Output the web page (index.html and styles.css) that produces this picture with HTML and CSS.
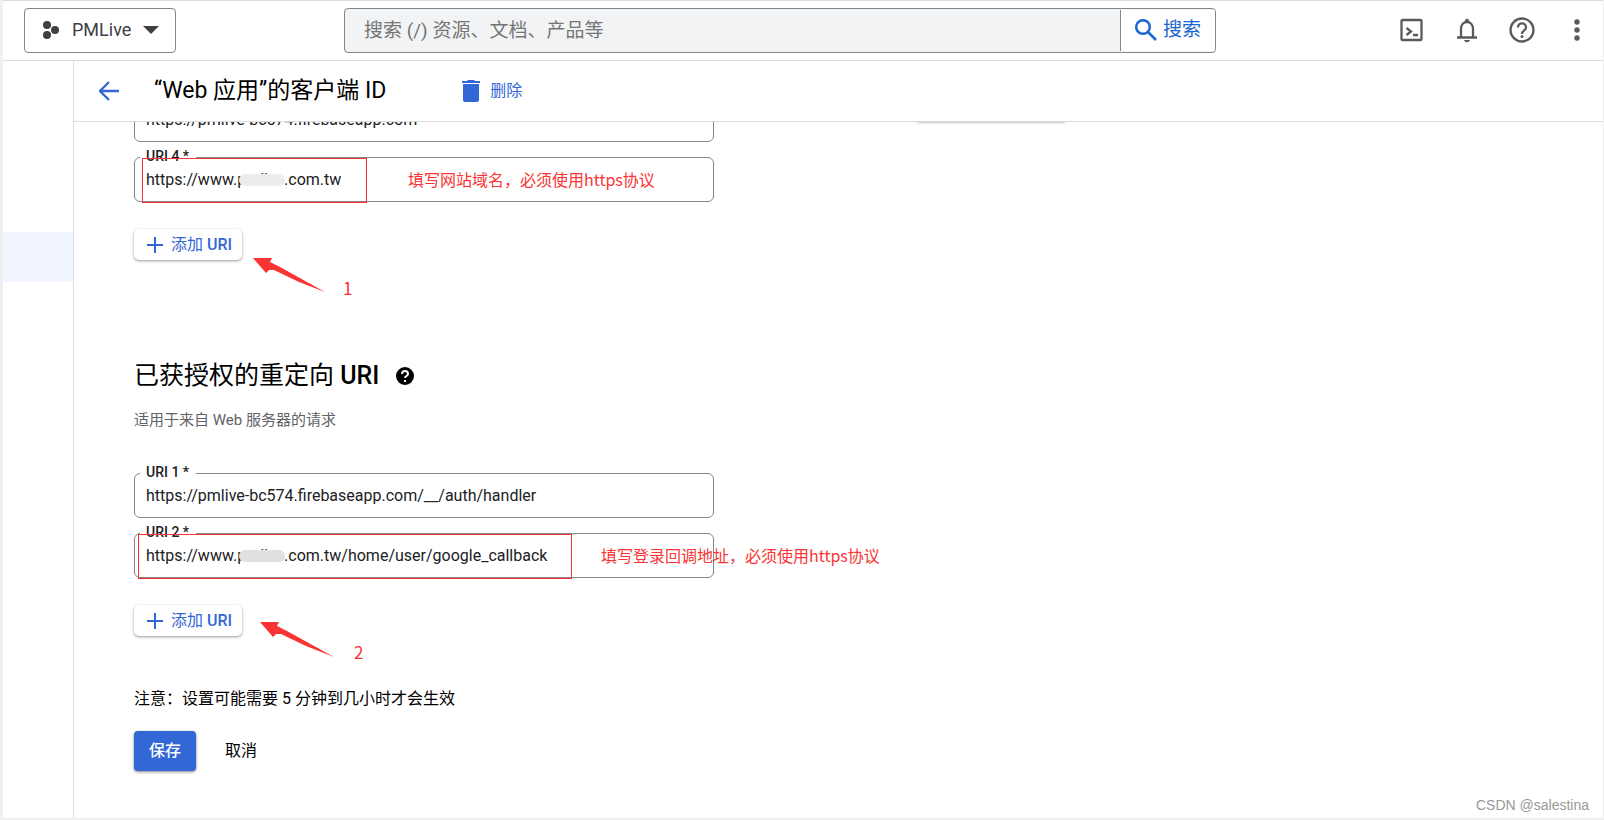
FILE: index.html
```html
<!DOCTYPE html>
<html lang="zh-CN">
<head>
<meta charset="utf-8">
<title>“Web 应用”的客户端 ID</title>
<link rel="stylesheet" href="styles.css">
</head>
<body>
<div class="frame">
  <header class="topbar">
    <button class="project" type="button">
      <svg class="project-icon" viewBox="0 0 18 18" aria-hidden="true"><circle cx="5" cy="4" r="4"/><circle cx="13" cy="9" r="4"/><circle cx="5" cy="14" r="4"/></svg>
      <span>PMLive</span>
      <svg class="caret" viewBox="0 0 16 8" aria-hidden="true"><path d="M0 0h16L8 8z"/></svg>
    </button>
    <form class="search">
      <input class="search-input" type="text" aria-label="搜索" placeholder="搜索 (/) 资源、文档、产品等">
      <button class="search-button" type="button">
        <svg viewBox="0 0 22 22" aria-hidden="true"><circle cx="8" cy="8" r="6.800"/><path d="M13 13l8 8"/></svg>
        <span>搜索</span>
      </button>
    </form>
    <nav class="tools">
      <button class="tool" type="button" aria-label="Cloud Shell"><svg viewBox="0 0 26 26"><rect class="line heavy" x="2.500" y="3" width="20" height="20" rx="1"/><path class="line heavy" d="M7.500 11l4.500 3.500-4.500 3.500M14 18h5"/></svg></button>
      <button class="tool" type="button" aria-label="通知"><svg viewBox="0 0 26 26"><path class="line heavy" d="M7 20v-8c0-4 2.500-7 6-7s6 3 6 7v8M3 20.500h20"/><path d="M11 4c0-3 4-3 4 0v1h-4zM10 23h6c-1 3-5 3-6 0z"/></svg></button>
      <button class="tool" type="button" aria-label="帮助"><svg viewBox="0 0 26 26"><circle class="line heavy" cx="13" cy="13" r="11.500"/><path class="line heavy" d="M9 10.500C9 5 17 5 17 10.500c0 3-4 3-4 6.500"/><circle cx="13" cy="19.500" r="1.500"/></svg></button>
      <button class="tool" type="button" aria-label="更多"><svg viewBox="0 0 26 26"><circle cx="13" cy="5" r="2.700"/><circle cx="13" cy="13" r="2.700"/><circle cx="13" cy="21" r="2.700"/></svg></button>
    </nav>
  </header>
  <div class="body">
    <aside class="sidebar"><div class="sidebar-active"></div></aside>
    <section class="page">
      <div class="titlebar">
        <button class="back" type="button" aria-label="返回"><svg viewBox="0 0 20 20"><path d="M20 10H2M10 1l-9 9 9 9"/></svg></button>
        <h1>“Web 应用”的客户端 ID</h1>
        <button class="delete" type="button">
          <svg viewBox="0 0 18 24" aria-hidden="true"><path d="M0 2h5l1-1h6l1 1h5v2H0zM1 5h16v16q0 2-2 2H3q-2 0-2-2z"/></svg>
          <span>删除</span>
        </button>
      </div>
      <main class="content">
        <form class="form">
          <div class="fields">
            <div class="field">
              <input type="text" aria-label="URI 3" value="https://pmlive-bc574.firebaseapp.com">
            </div>
            <div class="field">
              <label for="origin4">URI 4 *</label>
              <input id="origin4" type="text" value="https://www.pmlive.com.tw">
              <span class="smudge"></span>
              <span class="mark mark-origin"></span>
              <span class="note note-origin">填写网站域名，必须使用https协议</span>
            </div>
          </div>
          <div class="add-row">
            <button class="add" type="button"><svg viewBox="0 0 16 16" aria-hidden="true"><path d="M8 0v16M0 8h16"/></svg><span>添加 <b>URI</b></span></button>
            <div class="pointer pointer-first"><svg viewBox="0 0 74 36" aria-hidden="true"><path d="M0 0h19l-2 4 10 5 45 25-26-10-25-12h-5l-3 3z"/></svg><span>1</span></div>
          </div>
          <h2><span>已获授权的重定向 <b>URI</b></span>
            <svg viewBox="0 0 18 18" aria-hidden="true"><circle cx="9" cy="9" r="9"/><path d="M6 7c0-4 6-4 6 0 0 2-3 2-3 4"/><path d="M9 13v2"/></svg>
          </h2>
          <p class="hint">适用于来自 Web 服务器的请求</p>
          <div class="fields">
            <div class="field">
              <label for="redirect1">URI 1 *</label>
              <input id="redirect1" type="text" value="https://pmlive-bc574.firebaseapp.com/__/auth/handler">
            </div>
            <div class="field">
              <label for="redirect2">URI 2 *</label>
              <input id="redirect2" type="text" value="https://www.pmlive.com.tw/home/user/google_callback">
              <span class="smudge smudge-dark"></span>
              <span class="mark mark-redirect"></span>
              <span class="note note-redirect">填写登录回调地址，必须使用https协议</span>
            </div>
          </div>
          <div class="add-row">
            <button class="add" type="button"><svg viewBox="0 0 16 16" aria-hidden="true"><path d="M8 0v16M0 8h16"/></svg><span>添加 <b>URI</b></span></button>
            <div class="pointer pointer-second"><svg viewBox="0 0 74 36" aria-hidden="true"><path d="M0 0h19l-2 4 10 5 47 26-28-11-25-12h-5l-3 3z"/></svg><span>2</span></div>
          </div>
          <p class="delay">注意：设置可能需要 5 分钟到几小时才会生效</p>
          <div class="actions">
            <button class="save" type="button">保存</button>
            <button class="cancel" type="button">取消</button>
          </div>
        </form>
        <div class="side-card"></div>
      </main>
    </section>
  </div>
  <div class="credit">CSDN @salestina</div>
</div>
</body>
</html>
```
FILE: styles.css
```css
* { box-sizing: border-box; }
body {
  margin: 0;
  background: #f0f0f0;
  color: #000;
  font: 16px/24px Roboto, "Noto Sans CJK SC", sans-serif;
}
button, input { font: inherit; color: inherit; }
button {
  display: flex;
  align-items: center;
  padding: 0;
  border: 0;
  background: none;
  white-space: nowrap;
}
h1, h2, p { margin: 0; }
b { font-weight: 500; }
svg { display: block; flex: none; }

.frame {
  position: relative;
  display: flex;
  flex-direction: column;
  height: 100vh;
  border: solid #f0f0f0;
  border-width: 0 1px 2px 3px;
  background: #fff;
  overflow: hidden;
}

.topbar {
  display: flex;
  align-items: center;
  flex: none;
  height: 61px;
  padding: 0 13px 0 21px;
  border-top: 1px solid #dadce0;
  border-bottom: 1px solid #dadce0;
}
.project {
  flex: none;
  width: 152px;
  height: 45px;
  padding: 0 0 2px 17px;
  border: 1px solid #80868b;
  border-radius: 4px;
  color: #3c4043;
  font-size: 18px;
}
.project svg { fill: #3c4043; }
.project-icon { width: 18px; height: 18px; margin-right: 12px; }
.caret { width: 16px; height: 8px; margin-left: 12px; }
.search {
  display: flex;
  flex: 1;
  height: 45px;
  margin: 0 183px 0 168px;
  border: 1px solid #80868b;
  border-radius: 4px;
  background: #f1f3f4;
  font-size: 19px;
  overflow: hidden;
}
.search-input {
  flex: 1;
  min-width: 0;
  padding: 0 19px;
  border: 0;
  background: none;
}
.search-input::placeholder { color: #757575; opacity: 1; }
.search-button {
  width: 95px;
  height: 41px;
  margin-top: 1px;
  padding: 0 0 2px 14px;
  gap: 6px;
  border-left: 1px solid #80868b;
  background: #fff;
  color: #1967d2;
}
.search-button svg { width: 22px; height: 22px; fill: none; stroke: #1967d2; stroke-width: 2.5; }
.tools { display: flex; gap: 29px; padding-bottom: 2px; }
.tool svg { width: 26px; height: 26px; fill: #5a5a5a; }
.tool svg .line { fill: none; stroke: #5a5a5a; stroke-width: 2.3; }

.body { display: flex; flex: 1; min-height: 0; }
.sidebar {
  flex: none;
  width: 71px;
  padding-top: 171px;
  border-right: 1px solid #dadce0;
}
.sidebar-active { height: 50px; background: #f0f5ff; }
.page { display: flex; flex: 1; flex-direction: column; min-width: 0; }
.titlebar {
  display: flex;
  align-items: center;
  flex: none;
  height: 61px;
  padding-left: 25px;
  border-bottom: 1px solid #dadce0;
}
.back svg { width: 20px; height: 20px; fill: none; stroke: #3367d6; stroke-width: 2.3; }
h1 { margin: 0 76px 0 35px; font-size: 23px; font-weight: 400; }
.delete { gap: 10px; color: #3367d6; }
.delete svg { width: 18px; height: 24px; fill: #3367d6; }

.content {
  display: flex;
  flex: 1;
  align-items: flex-start;
  gap: 202px;
  min-height: 0;
  padding-left: 60px;
  overflow: hidden;
}
.form { width: 580px; margin-top: -25px; }
.fields { display: grid; gap: 15px; }
.field { position: relative; }
.field input {
  display: block;
  width: 100%;
  height: 45px;
  padding: 0 11px;
  border: 1px solid #80868b;
  border-radius: 6px;
  background: #fff;
  color: #202124;
}
.field label {
  position: absolute;
  top: -11px;
  left: 6px;
  height: 20px;
  padding: 0 7px 0 6px;
  background: #fff;
  color: #202124;
  font-size: 14px;
  font-weight: 500;
  line-height: 20px;
}
.smudge {
  position: absolute;
  top: 17px;
  left: 105px;
  width: 46px;
  height: 12px;
  border-radius: 6px;
  background: #ececec;
}
.smudge-dark { background: #e0e0e0; }
.mark { position: absolute; top: 1px; height: 45px; border: 1px solid #fa3434; }
.mark-origin { left: 8px; width: 225px; }
.mark-redirect { left: 4px; width: 434px; }
.note {
  position: absolute;
  top: 10px;
  color: #fa3434;
  font-family: "Noto Sans CJK SC", sans-serif;
  white-space: nowrap;
}
.note-origin { left: 274px; }
.note-redirect { left: 467px; }

.add-row { position: relative; margin-top: 27px; }
.add {
  height: 31px;
  padding: 0 10px 0 13px;
  gap: 8px;
  border-radius: 5px;
  box-shadow: 0 1px 3px rgba(0, 0, 0, .4);
  color: #3367d6;
}
.add svg { width: 16px; height: 16px; stroke: #3367d6; stroke-width: 2; }
.pointer {
  position: absolute;
  display: flex;
  color: #fa3434;
  font-family: "Noto Sans CJK SC", sans-serif;
  font-size: 17px;
}
.pointer svg { width: 74px; height: 36px; fill: #fa3434; }
.pointer span { padding-top: 18px; }
.pointer-first { top: 29px; left: 119px; gap: 16px; }
.pointer-second { top: 17px; left: 126px; gap: 20px; }

h2 {
  display: flex;
  align-items: center;
  gap: 17px;
  margin-top: 99px;
  font-size: 25px;
  font-weight: 400;
  line-height: 34px;
}
h2 svg { width: 18px; height: 18px; }
h2 path { fill: none; stroke: #fff; stroke-width: 2; }
.hint { margin: 15px 0 41px; color: #5f6368; font-size: 15px; }
.delay { margin-top: 51px; }
.actions { display: flex; gap: 29px; margin-top: 20px; }
.save {
  height: 40px;
  padding: 0 15px;
  border-radius: 4px;
  background: #3367d6;
  box-shadow: 0 1px 3px rgba(0, 0, 0, .5);
  color: #fff;
  font-weight: 500;
}
.side-card {
  width: 150px;
  height: 24px;
  margin-top: -25px;
  border-radius: 4px;
  box-shadow: 0 1px 3px rgba(0, 0, 0, .5);
}
.credit {
  position: absolute;
  right: 14px;
  bottom: 1px;
  color: #999;
  font-family: "Liberation Sans", Arial, sans-serif;
  font-size: 14px;
}
```
